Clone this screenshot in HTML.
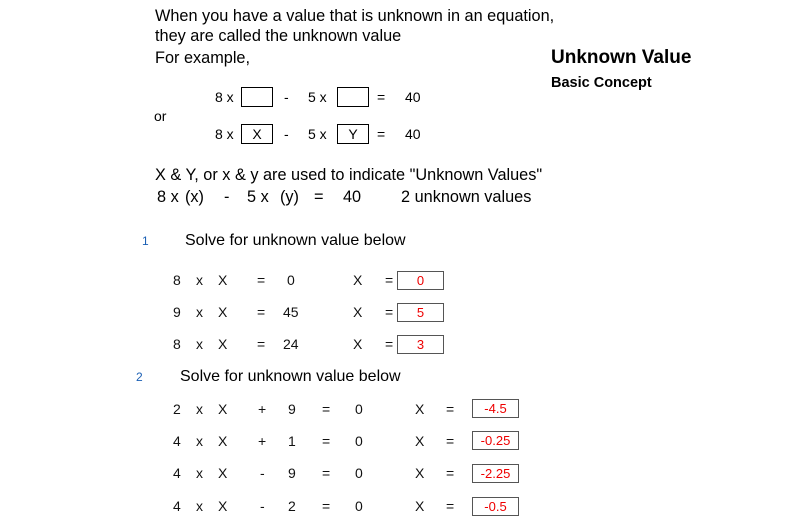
<!DOCTYPE html>
<html><head><meta charset="utf-8"><style>
body{margin:0;width:799px;height:525px;background:#fff;position:relative;overflow:hidden;font-family:"Liberation Sans",Arial,sans-serif;color:#000}
span,div{position:absolute;white-space:nowrap;line-height:20px}
.m{font-size:16.3px}
.e{font-size:14px}
.s{font-size:14px;color:#111}
.b{border:1px solid #000;height:18px;line-height:18px;text-align:center;font-size:14px}
.r{border:1px solid #555;height:17px;line-height:17px;text-align:center;font-size:13px;color:#e00}
.blue{color:#1a5fb4;font-size:12px}
</style></head><body>
<span class="m" style="left:155px;top:6px">When you have a value that is unknown in an equation,</span>
<span class="m" style="left:155px;top:26px">they are called the unknown value</span>
<span class="m" style="left:155px;top:48px">For example,</span>
<span style="left:551px;top:48px;font-size:19px;font-weight:bold">Unknown Value</span>
<span style="left:551px;top:73px;font-size:14.5px;font-weight:bold">Basic Concept</span>

<span class="e" style="left:215px;top:87px">8 x</span>
<div class="b" style="left:241px;top:87px;width:30px"></div>
<span class="e" style="left:284px;top:87px">-</span>
<span class="e" style="left:308px;top:87px">5 x</span>
<div class="b" style="left:337px;top:87px;width:30px"></div>
<span class="e" style="left:377px;top:87px">=</span>
<span class="e" style="left:405px;top:87px">40</span>
<span class="e" style="left:154px;top:106px">or</span>
<span class="e" style="left:215px;top:124px">8 x</span>
<div class="b" style="left:241px;top:124px;width:30px">X</div>
<span class="e" style="left:284px;top:124px">-</span>
<span class="e" style="left:308px;top:124px">5 x</span>
<div class="b" style="left:337px;top:124px;width:30px">Y</div>
<span class="e" style="left:377px;top:124px">=</span>
<span class="e" style="left:405px;top:124px">40</span>

<span class="m" style="left:155px;top:165px">X &amp; Y, or x &amp; y are used to indicate "Unknown Values"</span>
<span class="m" style="left:157px;top:187px">8 x</span>
<span class="m" style="left:185px;top:187px">(x)</span>
<span class="m" style="left:224px;top:187px">-</span>
<span class="m" style="left:247px;top:187px">5 x</span>
<span class="m" style="left:280px;top:187px">(y)</span>
<span class="m" style="left:314px;top:187px">=</span>
<span class="m" style="left:343px;top:187px">40</span>
<span class="m" style="left:401px;top:187px">2 unknown values</span>

<span class="blue" style="left:142px;top:231px">1</span>
<span class="m" style="left:185px;top:231px;font-size:16px">Solve for unknown value below</span>

<span class="s" style="left:173px;top:270px">8</span><span class="s" style="left:196px;top:270px">x</span><span class="s" style="left:218px;top:270px">X</span><span class="s" style="left:257px;top:270px">=</span><span class="s" style="left:287px;top:270px">0</span><span class="s" style="left:353px;top:270px">X</span><span class="s" style="left:385px;top:270px">=</span><div class="r" style="left:397px;top:271px;width:45px">0</div>
<span class="s" style="left:173px;top:302px">9</span><span class="s" style="left:196px;top:302px">x</span><span class="s" style="left:218px;top:302px">X</span><span class="s" style="left:257px;top:302px">=</span><span class="s" style="left:283px;top:302px">45</span><span class="s" style="left:353px;top:302px">X</span><span class="s" style="left:385px;top:302px">=</span><div class="r" style="left:397px;top:303px;width:45px">5</div>
<span class="s" style="left:173px;top:334px">8</span><span class="s" style="left:196px;top:334px">x</span><span class="s" style="left:218px;top:334px">X</span><span class="s" style="left:257px;top:334px">=</span><span class="s" style="left:283px;top:334px">24</span><span class="s" style="left:353px;top:334px">X</span><span class="s" style="left:385px;top:334px">=</span><div class="r" style="left:397px;top:335px;width:45px">3</div>

<span class="blue" style="left:136px;top:367px">2</span>
<span class="m" style="left:180px;top:367px;font-size:16px">Solve for unknown value below</span>

<span class="s" style="left:173px;top:399px">2</span><span class="s" style="left:196px;top:399px">x</span><span class="s" style="left:218px;top:399px">X</span><span class="s" style="left:258px;top:399px">+</span><span class="s" style="left:288px;top:399px">9</span><span class="s" style="left:322px;top:399px">=</span><span class="s" style="left:355px;top:399px">0</span><span class="s" style="left:415px;top:399px">X</span><span class="s" style="left:446px;top:399px">=</span><div class="r" style="left:472px;top:399px;width:45px">-4.5</div>
<span class="s" style="left:173px;top:431px">4</span><span class="s" style="left:196px;top:431px">x</span><span class="s" style="left:218px;top:431px">X</span><span class="s" style="left:258px;top:431px">+</span><span class="s" style="left:288px;top:431px">1</span><span class="s" style="left:322px;top:431px">=</span><span class="s" style="left:355px;top:431px">0</span><span class="s" style="left:415px;top:431px">X</span><span class="s" style="left:446px;top:431px">=</span><div class="r" style="left:472px;top:431px;width:45px">-0.25</div>
<span class="s" style="left:173px;top:463px">4</span><span class="s" style="left:196px;top:463px">x</span><span class="s" style="left:218px;top:463px">X</span><span class="s" style="left:260px;top:463px">-</span><span class="s" style="left:288px;top:463px">9</span><span class="s" style="left:322px;top:463px">=</span><span class="s" style="left:355px;top:463px">0</span><span class="s" style="left:415px;top:463px">X</span><span class="s" style="left:446px;top:463px">=</span><div class="r" style="left:472px;top:464px;width:45px">-2.25</div>
<span class="s" style="left:173px;top:496px">4</span><span class="s" style="left:196px;top:496px">x</span><span class="s" style="left:218px;top:496px">X</span><span class="s" style="left:260px;top:496px">-</span><span class="s" style="left:288px;top:496px">2</span><span class="s" style="left:322px;top:496px">=</span><span class="s" style="left:355px;top:496px">0</span><span class="s" style="left:415px;top:496px">X</span><span class="s" style="left:446px;top:496px">=</span><div class="r" style="left:472px;top:497px;width:45px">-0.5</div>
</body></html>
